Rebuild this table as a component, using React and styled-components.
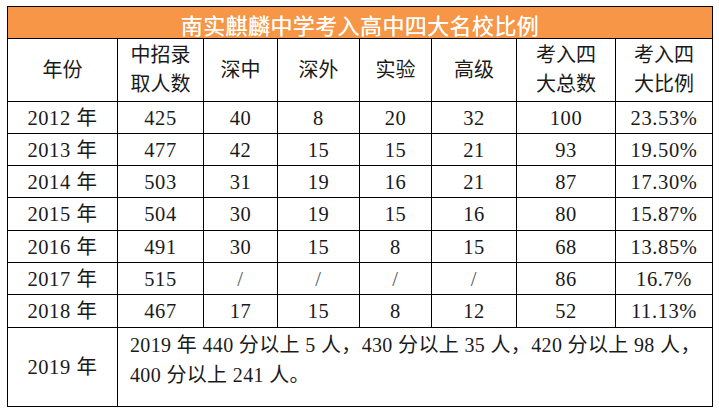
import React from "react"
import styled, { createGlobalStyle } from "styled-components"

const GlobalStyle = createGlobalStyle`
    html, body {
        margin: 0;
        padding: 0;
        background: #ffffff;
    }
`

const Frame = styled.div`
    padding: 6px 0px 0px 7px;
    width: 719px;
    height: 413px;
    box-sizing: border-box;
    background: #ffffff;
    font-family: 'Liberation Serif', 'Noto Sans CJK SC', serif;
    color: #1a1a1a;
`

const Sheet = styled.table`
    width: 706px;
    table-layout: fixed;
    border-collapse: collapse;
    border: 1px solid #000000;
`

const TitleCell = styled.td`
    height: 29px;
    padding: 2px 0px 0px 0px;
    background: #f79646;
    border: 1px solid #000000;
    color: #ffffff;
    font-family: 'Noto Sans CJK SC', sans-serif;
    font-size: 22px;
    letter-spacing: 0.4px;
    line-height: 28px;
    text-align: center;
    vertical-align: middle;
    text-shadow: 0px 0px 0.6px #ffffff;
`

const HeadCell = styled.td`
    height: 62px;
    padding: 0px;
    border: 1px solid #000000;
    font-size: 20px;
    line-height: 29px;
    text-align: center;
    vertical-align: middle;
    white-space: nowrap;
`

const Cell = styled.td`
    height: ${props => props.h}px;
    padding: 0px;
    border: 1px solid #000000;
    font-size: 20.5px;
    letter-spacing: 0.6px;
    line-height: 24px;
    text-align: center;
    vertical-align: middle;
    white-space: nowrap;
    color: ${props => props.muted ? '#555555' : '#1a1a1a'};
`

const NoteCell = styled.td`
    height: 76px;
    padding: 2px 0px 0px 12px;
    border: 1px solid #000000;
    font-size: 20px;
    letter-spacing: 0.35px;
    line-height: 30px;
    text-align: left;
    vertical-align: top;
    white-space: nowrap;
`

const widths = [110, 86, 74, 82, 72, 85, 99, 97]

const heads = [
    ['年份'],
    ['中招录', '取人数'],
    ['深中'],
    ['深外'],
    ['实验'],
    ['高级'],
    ['考入四', '大总数'],
    ['考入四', '大比例']
]

const rows = [
    ['2012 年', '425', '40', '8', '20', '32', '100', '23.53%'],
    ['2013 年', '477', '42', '15', '15', '21', '93', '19.50%'],
    ['2014 年', '503', '31', '19', '16', '21', '87', '17.30%'],
    ['2015 年', '504', '30', '19', '15', '16', '80', '15.87%'],
    ['2016 年', '491', '30', '15', '8', '15', '68', '13.85%'],
    ['2017 年', '515', '/', '/', '/', '/', '86', '16.7%'],
    ['2018 年', '467', '17', '15', '8', '12', '52', '11.13%']
]

const rowHeights = [32, 32, 32, 33, 32, 32, 33]

function App() {
    return (
        <Frame>
            <GlobalStyle />
            <Sheet>
                <colgroup>
                    {widths.map((w, i) => <col key={i} style={{ width: w }} />)}
                </colgroup>
                <tbody>
                    <tr>
                        <TitleCell colSpan={8}>南实麒麟中学考入高中四大名校比例</TitleCell>
                    </tr>
                    <tr>
                        {heads.map((lines, i) => (
                            <HeadCell key={i}>
                                {lines.map((line, j) => <div key={j}>{line}</div>)}
                            </HeadCell>
                        ))}
                    </tr>
                    {rows.map((row, r) => (
                        <tr key={r}>
                            {row.map((value, c) => (
                                <Cell key={c} h={rowHeights[r] - 1} muted={value === '/'}>{value}</Cell>
                            ))}
                        </tr>
                    ))}
                    <tr>
                        <Cell h={78}>2019 年</Cell>
                        <NoteCell colSpan={7}>
                            2019 年 440 分以上 5 人，430 分以上 35 人，420 分以上 98 人，
                            <br />
                            400 分以上 241 人。
                        </NoteCell>
                    </tr>
                </tbody>
            </Sheet>
        </Frame>
    )
}

export default App
